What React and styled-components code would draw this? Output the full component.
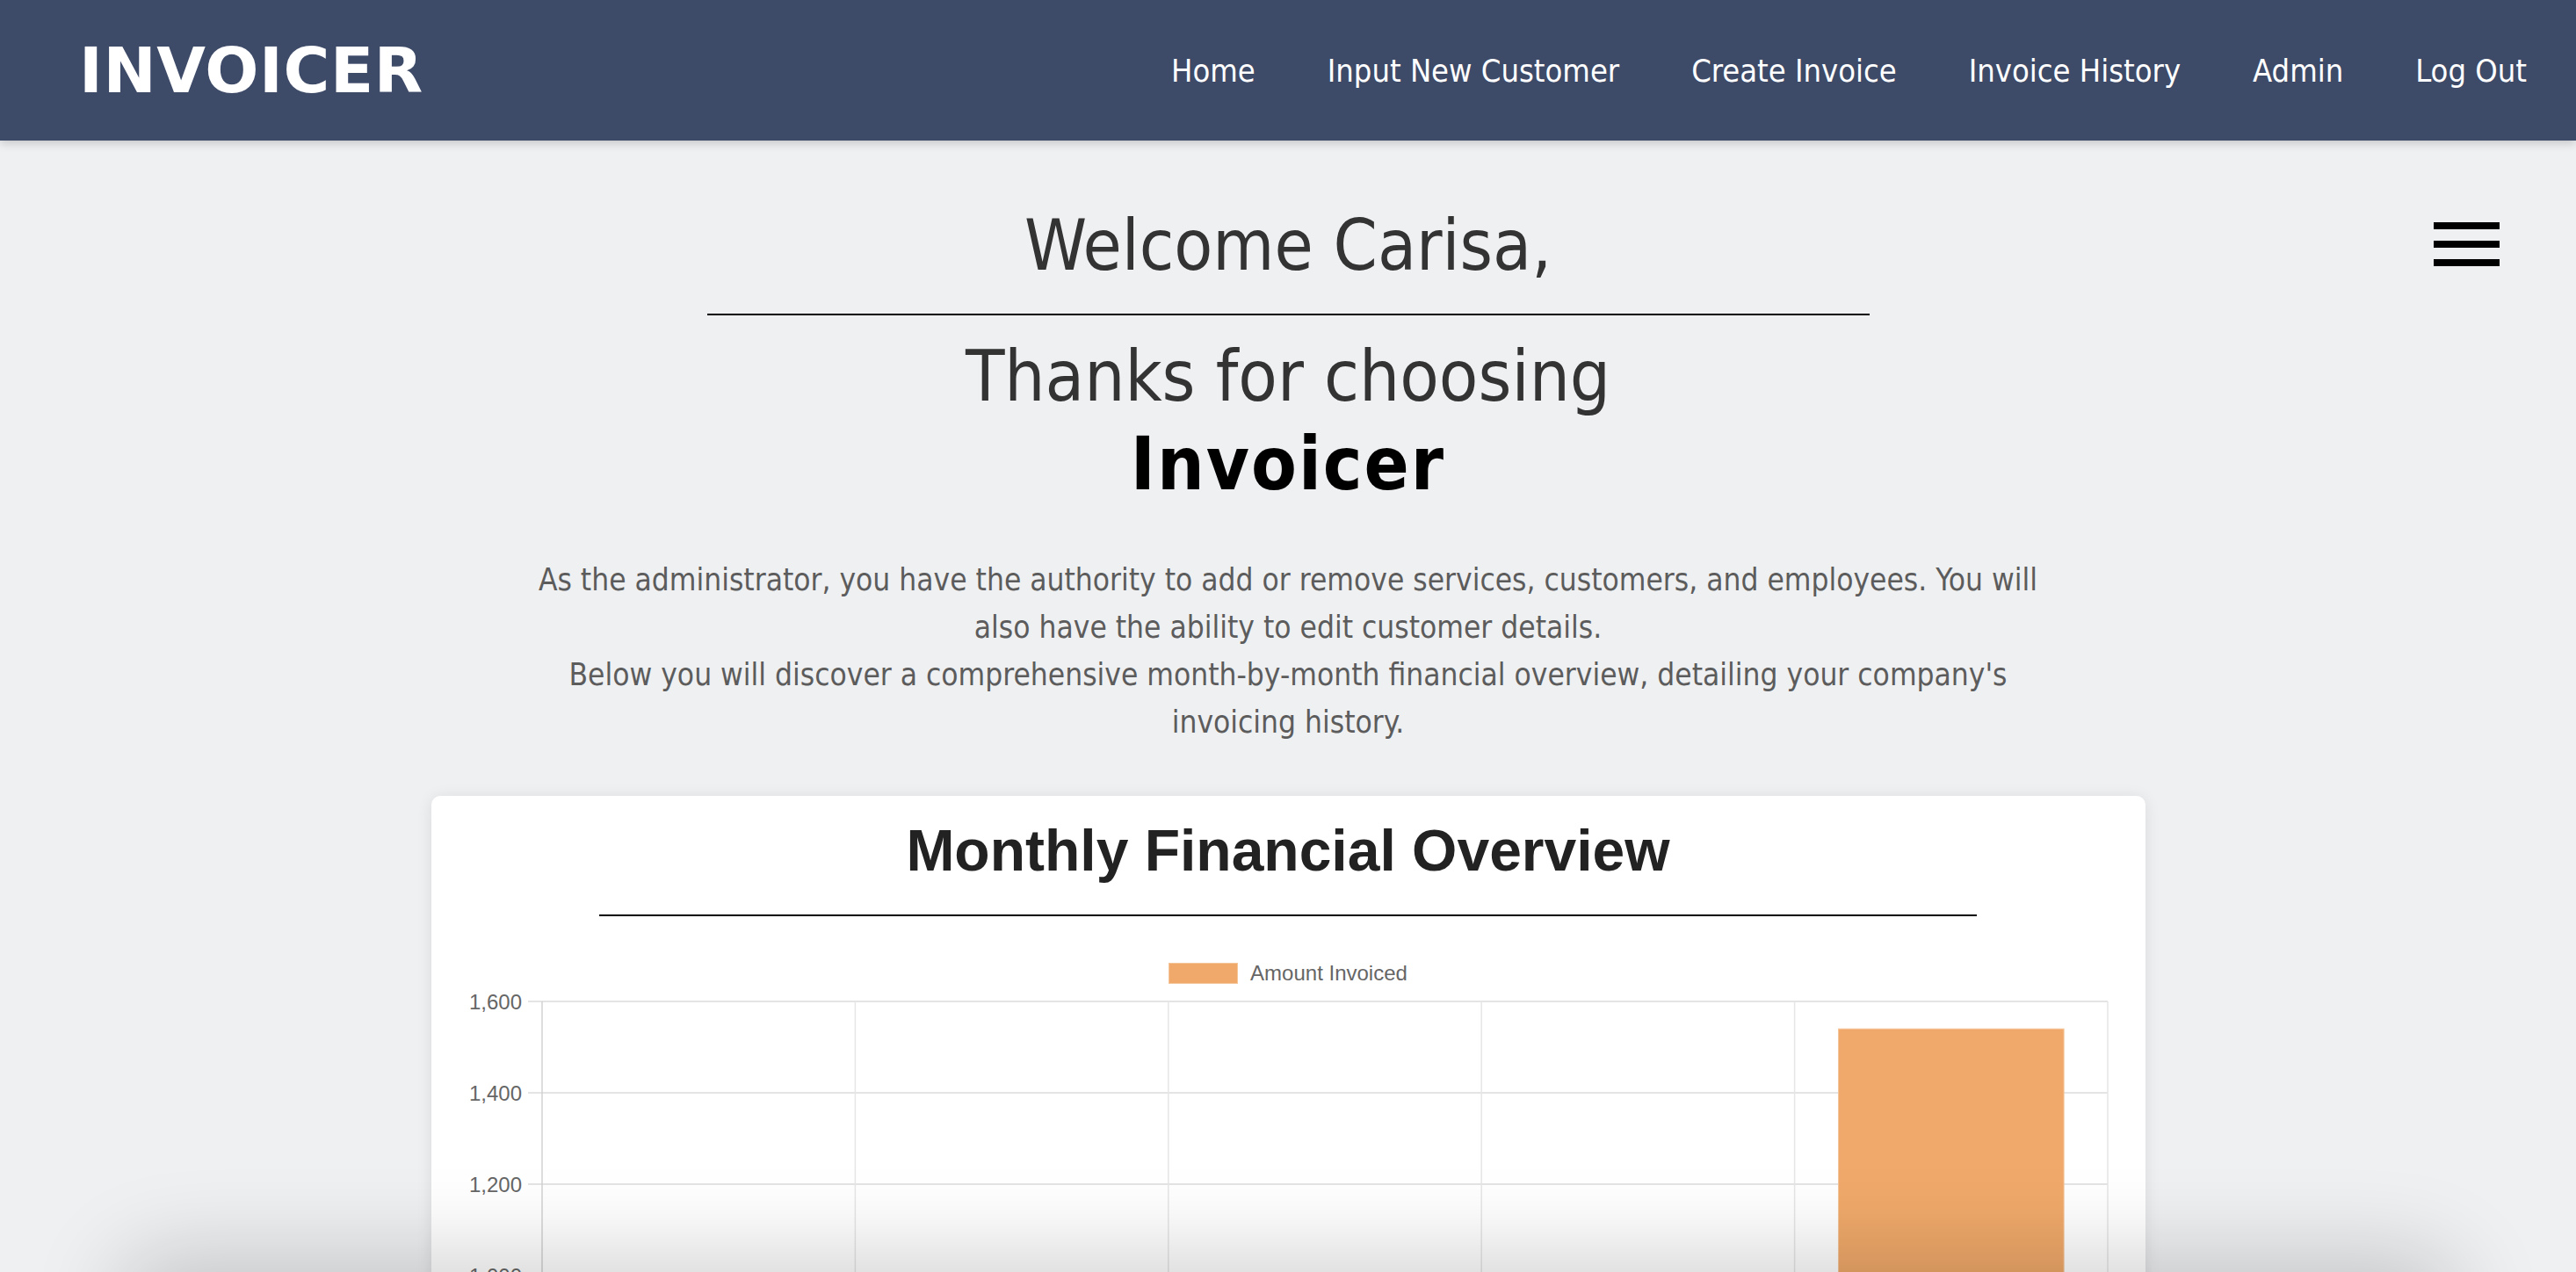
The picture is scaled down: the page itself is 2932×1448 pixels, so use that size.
import styled, { createGlobalStyle } from 'styled-components'

const GlobalStyle = createGlobalStyle`
  html,
  body {
    margin: 0;
    padding: 0;
  }

  body {
    background: #eff0f2;
    font-family: 'DejaVu Sans Condensed', 'DejaVu Sans', Verdana, sans-serif;
  }

  * {
    box-sizing: border-box;
  }
`

const Page = styled.div`
  height: 100vh;
  overflow: hidden;
  background: #eff0f2;
`

const NavBar = styled.nav`
  position: relative;
  z-index: 2;
  height: 160px;
  display: flex;
  align-items: center;
  justify-content: space-between;
  padding: 0 56px 0 90px;
  background: #3d4a68;
  box-shadow: 0 3px 10px rgba(0, 0, 0, 0.18);
`

const Brand = styled.a`
  font-family: 'DejaVu Sans', Verdana, sans-serif;
  font-weight: 700;
  font-size: 72px;
  letter-spacing: 0.6px;
  color: #fff;
  text-decoration: none;
`

const NavLinks = styled.ul`
  display: flex;
  align-items: center;
  gap: 82px;
  margin: 0;
  padding: 0;
  list-style: none;
`

const NavLink = styled.a`
  font-size: 36px;
  color: #fff;
  text-decoration: none;
  cursor: pointer;
`

const Hero = styled.header`
  display: grid;
  grid-template-columns: 1fr 1323px 1fr;
  align-items: start;
  padding-top: 72px;
`

const Greeting = styled.div`
  grid-column: 2;
  text-align: center;
`

const Welcome = styled.h1`
  margin: 0;
  padding-bottom: 29px;
  border-bottom: 2px solid #000;
  font-size: 80px;
  line-height: 96px;
  font-weight: 400;
  color: #333;
`

const Thanks = styled.h2`
  margin: 19px 0 0;
  font-size: 81px;
  line-height: 100px;
  font-weight: 400;
  color: #333;
`

const AppName = styled.strong`
  display: block;
  font-size: 84px;
  line-height: 100px;
  letter-spacing: 2px;
  font-weight: 700;
  color: #000;
`

const MenuButton = styled.button`
  grid-column: 3;
  justify-self: end;
  width: 75px;
  margin: 21px 87px 0 0;
  padding: 0;
  display: flex;
  flex-direction: column;
  gap: 13px;
  border: none;
  background: none;
  cursor: pointer;
`

const MenuBar = styled.span`
  display: block;
  height: 8px;
  background: #000;
`

const Intro = styled.div`
  width: 1760px;
  margin: 55px auto 0;
  text-align: center;
  font-size: 35px;
  line-height: 54px;
  color: #5c5c5c;
`

const IntroText = styled.p`
  margin: 0;
`

const Card = styled.section`
  width: 1951px;
  margin: 57px auto 0;
  padding: 23px 30px 40px;
  background: #fff;
  border-radius: 10px;
  box-shadow: 0 2px 18px rgba(0, 0, 0, 0.09);
`

const CardTitle = styled.h3`
  margin: 0;
  text-align: center;
  font-family: 'Liberation Sans', Arial, sans-serif;
  font-weight: 700;
  font-size: 66px;
  line-height: 78px;
  color: #222;
`

const TitleRule = styled.hr`
  width: 1568px;
  margin: 34px auto 0;
  border: none;
  border-top: 2px solid #000;
`

const Legend = styled.div`
  display: flex;
  justify-content: center;
  align-items: center;
  gap: 14px;
  margin-top: 53px;
`

const LegendSwatch = styled.span`
  width: 79px;
  height: 24px;
  background: ${({ color }) => color};
  border: 1px solid ${({ border }) => border};
`

const LegendLabel = styled.span`
  font-family: 'Liberation Sans', Arial, sans-serif;
  font-size: 24px;
  line-height: 24px;
  color: #666;
`

const ChartSvg = styled.svg`
  display: block;
`

const AxisLabel = styled.text`
  font-family: 'Liberation Sans', Arial, sans-serif;
  font-size: 24px;
  fill: #666;
`

const BottomShade = styled.div`
  position: fixed;
  z-index: 5;
  left: 150px;
  right: 150px;
  bottom: -80px;
  height: 80px;
  border-radius: 80px;
  box-shadow: 0 0 100px 20px rgba(0, 0, 0, 0.18);
  pointer-events: none;
`

const links = [
  'Home',
  'Input New Customer',
  'Create Invoice',
  'Invoice History',
  'Admin',
  'Log Out',
]

const BAR_FILL = '#f0a96a'
const BAR_BORDER = '#f5c59a'

// last five months, only the latest one has invoices so far
const monthly = [0, 0, 0, 0, 1540]

const plot = { left: 96, right: 1878, top: 20, step: 104, max: 1600 }
const ticks = [1600, 1400, 1200, 1000, 800, 600, 400, 200, 0]
const yOf = v => plot.top + ((plot.max - v) / 200) * plot.step
const bottom = yOf(0)
const catWidth = (plot.right - plot.left) / monthly.length

const FinancialChart = () => (
  <ChartSvg width="1891" height="880" viewBox="0 0 1891 880">
    {ticks.map(t => (
      <g key={t}>
        <line
          x1="80"
          x2={plot.right}
          y1={yOf(t)}
          y2={yOf(t)}
          stroke="#e4e4e4"
          strokeWidth="2"
        />
        <AxisLabel x="73" y={yOf(t)} textAnchor="end" dominantBaseline="central">
          {t.toLocaleString('en-US')}
        </AxisLabel>
      </g>
    ))}
    {monthly.map((_, i) => (
      <line
        key={i}
        x1={plot.left + i * catWidth}
        x2={plot.left + i * catWidth}
        y1={plot.top}
        y2={bottom + 16}
        stroke={i === 0 ? '#d2d2d2' : '#e6e6e6'}
        strokeWidth="1.5"
      />
    ))}
    <line
      x1={plot.right}
      x2={plot.right}
      y1={plot.top}
      y2={bottom + 16}
      stroke="#e6e6e6"
      strokeWidth="1.5"
    />
    {monthly.map((amount, i) => {
      if (!amount) return null
      const w = catWidth * 0.72
      const x = plot.left + i * catWidth + (catWidth - w) / 2
      const y = yOf(amount)
      return (
        <rect
          key={i}
          x={x}
          y={y}
          width={w}
          height={bottom - y}
          fill={BAR_FILL}
          stroke={BAR_BORDER}
          strokeWidth="1"
        />
      )
    })}
  </ChartSvg>
)

export default function App() {
  return (
    <Page>
      <GlobalStyle />
      <NavBar>
        <Brand>INVOICER</Brand>
        <NavLinks>
          {links.map(l => (
            <li key={l}>
              <NavLink>{l}</NavLink>
            </li>
          ))}
        </NavLinks>
      </NavBar>

      <Hero>
        <Greeting>
          <Welcome>Welcome Carisa,</Welcome>
          <Thanks>
            Thanks for choosing
            <AppName>Invoicer</AppName>
          </Thanks>
        </Greeting>
        <MenuButton aria-label="menu">
          <MenuBar />
          <MenuBar />
          <MenuBar />
        </MenuButton>
      </Hero>

      <Intro>
        <IntroText>
          As the administrator, you have the authority to add or remove services, customers, and
          employees. You will also have the ability to edit customer details.
        </IntroText>
        <IntroText>
          Below you will discover a comprehensive month-by-month financial overview, detailing your
          company's invoicing history.
        </IntroText>
      </Intro>

      <Card>
        <CardTitle>Monthly Financial Overview</CardTitle>
        <TitleRule />
        <Legend>
          <LegendSwatch color={BAR_FILL} border={BAR_BORDER} />
          <LegendLabel>Amount Invoiced</LegendLabel>
        </Legend>
        <FinancialChart />
      </Card>

      <BottomShade />
    </Page>
  )
}
